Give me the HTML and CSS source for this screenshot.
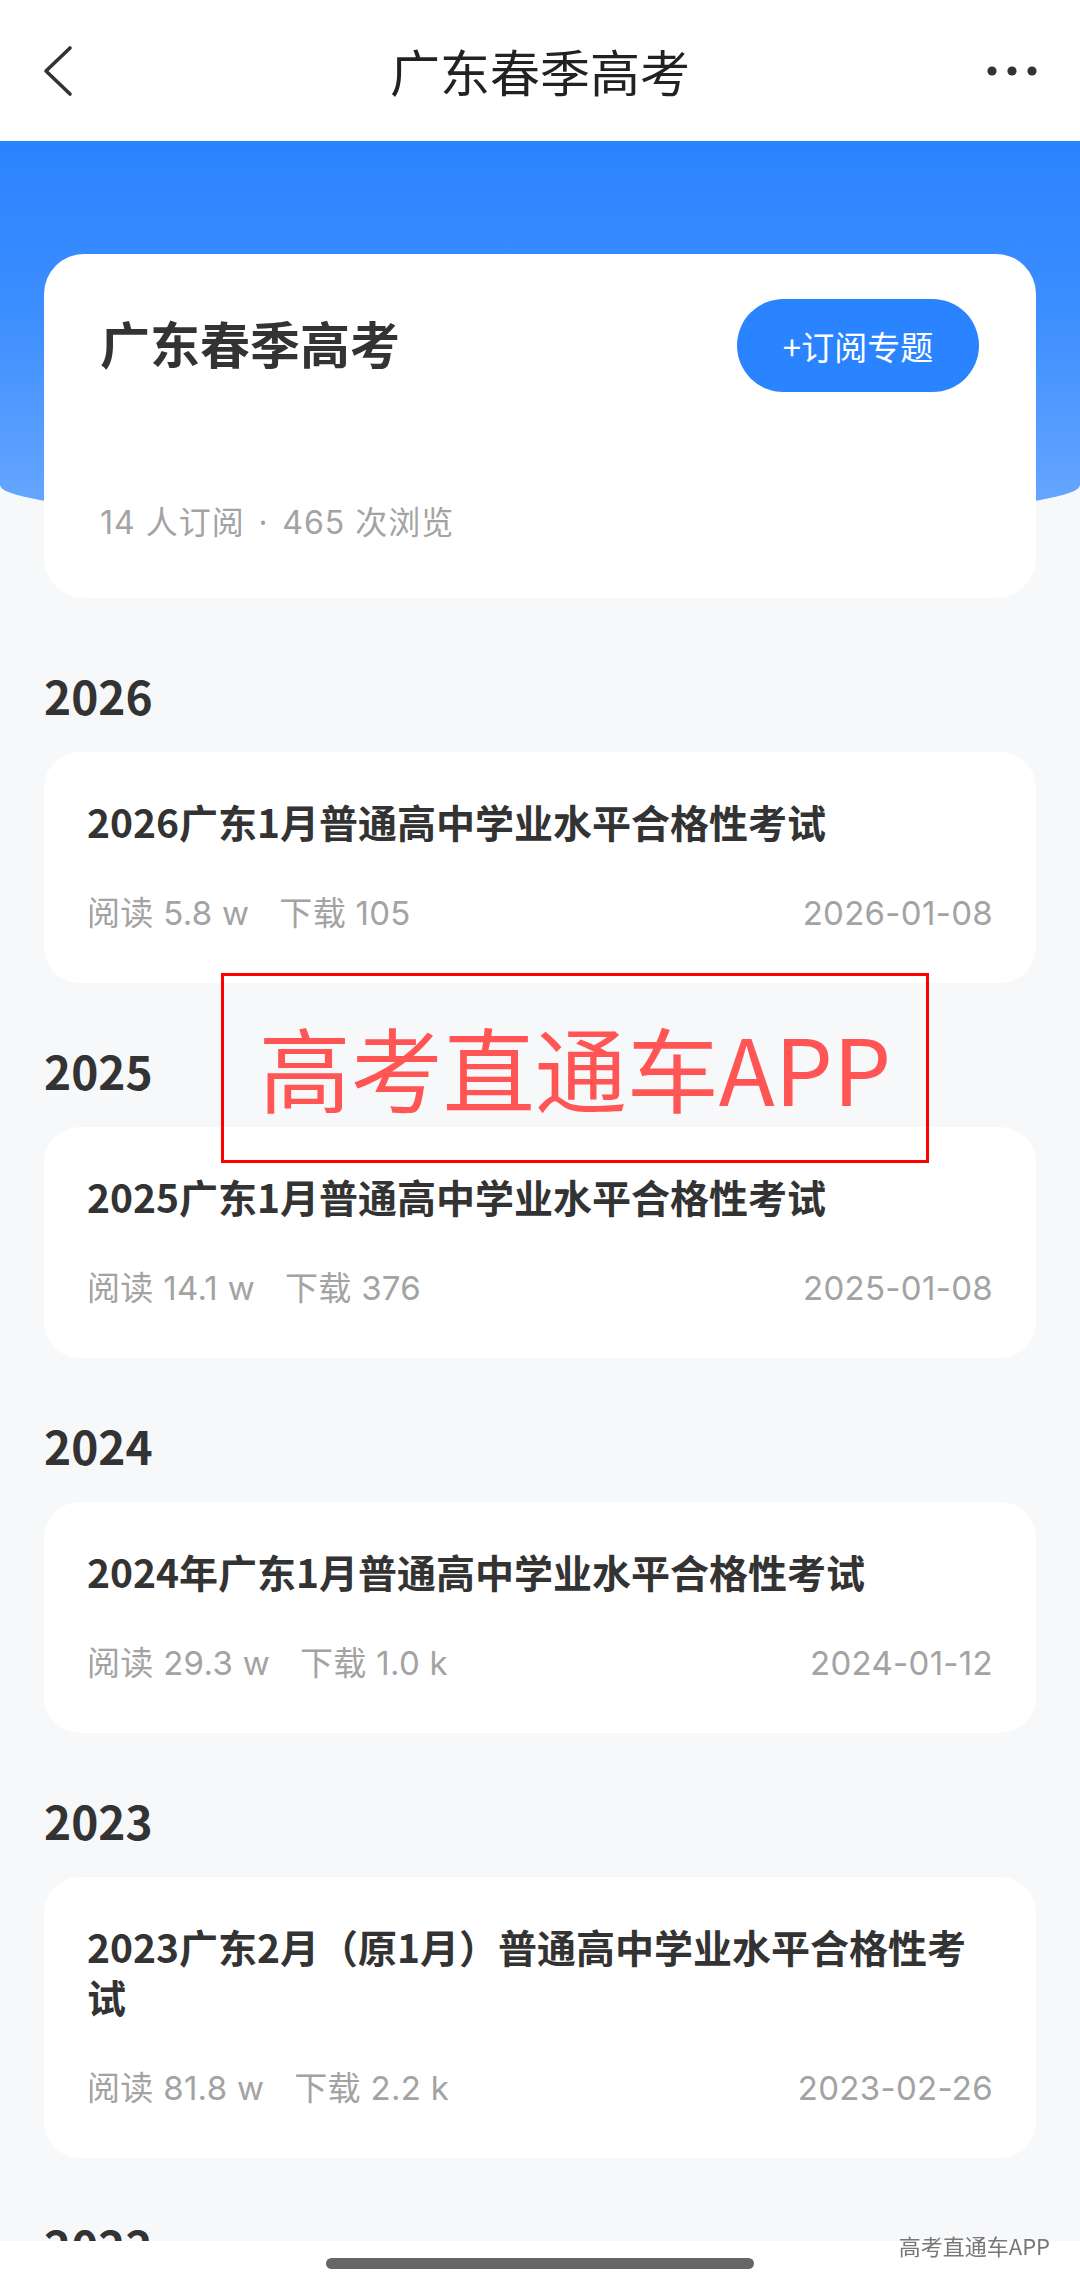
FILE: index.html
```html
<!DOCTYPE html>
<html lang="zh-CN">
<head>
<meta charset="utf-8">
<title>广东春季高考</title>
<link rel="stylesheet" href="styles.css">
</head>
<body>
<header class="topbar">
  <svg class="back" width="40" height="60" viewBox="0 0 40 60"><polyline points="30,6 6,29 30,52" fill="none" stroke="#333" stroke-width="3.6" stroke-linecap="round" stroke-linejoin="round"/></svg>
  <h1 class="topbar-title">广东春季高考</h1>
  <svg class="more" width="60" height="20" viewBox="0 0 60 20"><circle cx="10" cy="10" r="4.6" fill="#333"/><circle cx="30" cy="10" r="4.6" fill="#333"/><circle cx="50" cy="10" r="4.6" fill="#333"/></svg>
</header>

<div class="hero"></div>

<section class="topic-card">
  <div class="topic-row">
    <h2 class="topic-name">广东春季高考</h2>
    <button class="subscribe">+订阅专题</button>
  </div>
  <p class="topic-stats">14 人订阅<span class="dot">·</span>465 次浏览</p>
</section>

<main class="list">
  <section class="year">
    <h3 class="year-title">2026</h3>
    <article class="doc">
      <h4 class="doc-title">2026广东1月普通高中学业水平合格性考试</h4>
      <div class="doc-meta"><span class="m">阅读 5.8 w</span><span class="m">下载 105</span><span class="date">2026-01-08</span></div>
    </article>
  </section>
  <section class="year">
    <h3 class="year-title">2025</h3>
    <article class="doc">
      <h4 class="doc-title">2025广东1月普通高中学业水平合格性考试</h4>
      <div class="doc-meta"><span class="m">阅读 14.1 w</span><span class="m">下载 376</span><span class="date">2025-01-08</span></div>
    </article>
  </section>
  <section class="year">
    <h3 class="year-title">2024</h3>
    <article class="doc">
      <h4 class="doc-title">2024年广东1月普通高中学业水平合格性考试</h4>
      <div class="doc-meta"><span class="m">阅读 29.3 w</span><span class="m">下载 1.0 k</span><span class="date">2024-01-12</span></div>
    </article>
  </section>
  <section class="year">
    <h3 class="year-title">2023</h3>
    <article class="doc">
      <h4 class="doc-title">2023广东2月（原1月）普通高中学业水平合格性考试</h4>
      <div class="doc-meta"><span class="m">阅读 81.8 w</span><span class="m">下载 2.2 k</span><span class="date">2023-02-26</span></div>
    </article>
  </section>
  <section class="year">
    <h3 class="year-title">2022</h3>
  </section>
</main>

<div class="stamp"><span>高考直通车APP</span></div>

<footer class="navbar"><div class="pill"></div></footer>
<div class="mark">高考直通车APP</div>
</body>
</html>
```

FILE: styles.css
```css
* { box-sizing: border-box; }
html, body { margin: 0; padding: 0; }
body {
  background: #f7f8fa;
  font-family: "Noto Sans CJK SC", "Noto Sans", sans-serif;
  color: #333;
  width: 1080px;
  position: relative;
}
.topbar {
  height: 141px;
  background: #fff;
  display: flex;
  align-items: center;
  justify-content: space-between;
  padding: 0 38px 0 40px;
  position: relative;
}
.back { display: block; margin-top: 2px; }
.more { display: block; }
.topbar-title {
  position: absolute;
  left: 0; right: 0; top: 0;
  margin: 0;
  text-align: center;
  line-height: 141px;
  font-size: 50px;
  font-weight: 400;
  color: #222;
  pointer-events: none;
}
.hero {
  height: 384px;
  background: linear-gradient(180deg, #2a83ff 0%, #3d8eff 45%, #6aa8ff 100%);
  border-radius: 0 0 50% 50% / 0 0 40px 40px;
}
.topic-card {
  position: relative;
  margin: -271px 44px 0;
  height: 344px;
  background: #fff;
  border-radius: 40px;
  padding: 45px 57px 0 56px;
}
.topic-row {
  display: flex;
  align-items: center;
  justify-content: space-between;
  height: 93px;
}
.topic-name {
  margin: 0;
  padding-bottom: 8px;
  font-size: 50px;
  font-weight: 700;
  color: #333;
  line-height: 60px;
}
.subscribe {
  width: 242px;
  height: 93px;
  border: none;
  border-radius: 47px;
  background: #2a84ff;
  color: #fff;
  font-family: inherit;
  font-size: 33px;
  font-weight: 400;
  padding: 0;
}
.topic-stats {
  margin: 108px 0 0;
  font-family: Inter, "Noto Sans CJK SC", sans-serif;
  font-size: 32px;
  line-height: 44px;
  color: #a3a3a3;
  letter-spacing: 1px;
}
.dot { margin: 0 14px; font-family: "Noto Sans", sans-serif; }
.list {
  padding: 10px 44px 0;
}
.year { padding-top: 57px; }
.year-title {
  margin: 0 0 27px;
  font-size: 46px;
  font-weight: 700;
  line-height: 60px;
  color: #333;
}
.doc {
  background: #fff;
  border-radius: 36px;
  padding: 44px 43px 47px;
}
.doc-title {
  margin: 0;
  font-size: 39px;
  font-weight: 600;
  line-height: 50px;
  color: #333;
}
.doc-meta {
  margin-top: 44px;
  display: flex;
  align-items: center;
  gap: 30px;
  font-family: Inter, "Noto Sans CJK SC", sans-serif;
  font-size: 33px;
  line-height: 46px;
  color: #a3a3a3;
  letter-spacing: 0.3px;
}
.date { margin-left: auto; }
.stamp {
  position: absolute;
  left: 221px;
  top: 973px;
  width: 708px;
  height: 190px;
  border: 3px solid #ff0000;
  display: flex;
  align-items: center;
  justify-content: center;
}
.stamp span {
  font-size: 92px;
  line-height: 1;
  color: #ff5555;
  margin-top: -4px;
}
.navbar {
  position: fixed;
  left: 0; right: 0; bottom: 0;
  height: 44px;
  background: #fff;
  display: flex;
  justify-content: center;
  padding-top: 17px;
}
.pill {
  width: 428px;
  height: 11px;
  border-radius: 6px;
  background: #666;
}
.mark {
  position: fixed;
  right: 30px;
  bottom: 28px;
  font-size: 22px;
  line-height: 24px;
  color: #777;
  text-shadow: 0 0 2px #fff;
}
```
